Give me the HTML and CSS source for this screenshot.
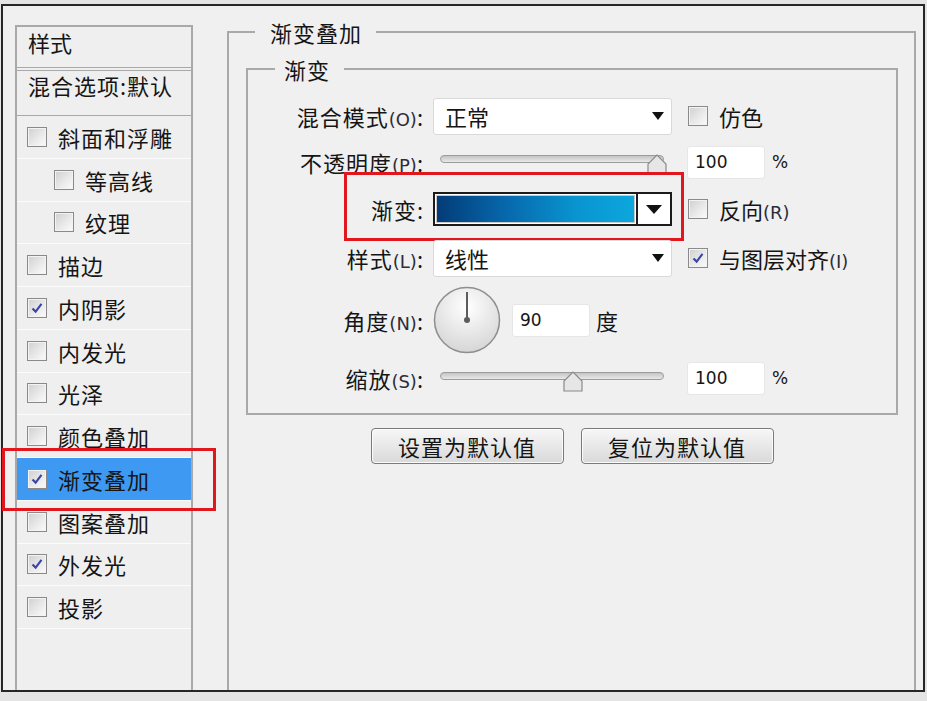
FILE: index.html
```html
<!DOCTYPE html>
<html lang="zh-CN">
<head>
    <meta charset="UTF-8">
    <title>图层样式 - 渐变叠加</title>
    <link rel="stylesheet" href="styles.css">
</head>
<body>
    <div class="window">
        <!-- 左侧样式列表 -->
        <div class="style-list">
            <div class="list-head">样式</div>
            <div class="list-blend">混合选项:默认</div>
            <div class="list-item"><span class="check"></span>斜面和浮雕</div>
            <div class="list-item sub"><span class="check"></span>等高线</div>
            <div class="list-item sub"><span class="check"></span>纹理</div>
            <div class="list-item"><span class="check"></span>描边</div>
            <div class="list-item"><span class="check on"><svg viewBox="0 0 20 20"><path d="M5 10.5 8.5 14 15 5.5"/></svg></span>内阴影</div>
            <div class="list-item"><span class="check"></span>内发光</div>
            <div class="list-item"><span class="check"></span>光泽</div>
            <div class="list-item"><span class="check"></span>颜色叠加</div>
            <div class="list-item selected"><span class="check on"><svg viewBox="0 0 20 20"><path d="M5 10.5 8.5 14 15 5.5"/></svg></span>渐变叠加<span class="mark mark-list"></span></div>
            <div class="list-item"><span class="check"></span>图案叠加</div>
            <div class="list-item"><span class="check on"><svg viewBox="0 0 20 20"><path d="M5 10.5 8.5 14 15 5.5"/></svg></span>外发光</div>
            <div class="list-item"><span class="check"></span>投影</div>
        </div>

        <!-- 右侧设置 -->
        <fieldset class="group">
            <legend>渐变叠加</legend>
            <fieldset class="group-inner">
                <legend>渐变</legend>

                <div class="row row-blend">
                    <label>混合模式<span class="hot">(O)</span>:</label>
                    <div class="select">正常<i class="caret"></i></div>
                    <div class="extra"><span class="check"></span><span class="extra-text">仿色</span></div>
                </div>

                <div class="row row-opacity">
                    <label>不透明度<span class="hot">(P)</span>:</label>
                    <div class="slider">
                        <span class="track"></span>
                        <svg class="thumb thumb-full" viewBox="0 0 20 21"><path d="M1 20V10L10 1l9 9v10z"/></svg>
                    </div>
                    <div class="extra value"><span class="num-box">100</span><span class="unit">%</span></div>
                </div>

                <div class="row row-gradient">
                    <label>渐变:</label>
                    <div class="gradient-pick">
                        <span class="gradient-bar"></span>
                        <span class="gradient-btn"><i class="caret big"></i></span>
                    </div>
                    <div class="extra"><span class="check"></span><span class="extra-text">反向<span class="hot">(R)</span></span></div>
                    <span class="mark mark-gradient"></span>
                </div>

                <div class="row row-style">
                    <label>样式<span class="hot">(L)</span>:</label>
                    <div class="select">线性<i class="caret"></i></div>
                    <div class="extra"><span class="check on"><svg viewBox="0 0 20 20"><path d="M5 10.5 8.5 14 15 5.5"/></svg></span><span class="extra-text">与图层对齐<span class="hot">(I)</span></span></div>
                </div>

                <div class="row row-angle">
                    <label>角度<span class="hot">(N)</span>:</label>
                    <div class="angle">
                        <svg class="dial" viewBox="0 0 68 68">
                            <defs>
                                <radialGradient id="dialFill" cx="50%" cy="30%" r="70%">
                                    <stop offset="0" stop-color="#ffffff"/>
                                    <stop offset="1" stop-color="#d6d6d6"/>
                                </radialGradient>
                            </defs>
                            <circle cx="34" cy="34" r="32.5" fill="url(#dialFill)" stroke="#8e8e8e" stroke-width="1.5"/>
                            <line x1="34" y1="34" x2="34" y2="6" stroke="#5c5c5c" stroke-width="2"/>
                            <circle cx="34" cy="34" r="3" fill="#5c5c5c"/>
                        </svg>
                        <span class="num-box">90</span>
                        <span class="angle-unit">度</span>
                    </div>
                </div>

                <div class="row row-scale">
                    <label>缩放<span class="hot">(S)</span>:</label>
                    <div class="slider">
                        <span class="track"></span>
                        <svg class="thumb thumb-mid" viewBox="0 0 20 21"><path d="M1 20V10L10 1l9 9v10z"/></svg>
                    </div>
                    <div class="extra value"><span class="num-box">100</span><span class="unit">%</span></div>
                </div>
            </fieldset>

            <div class="buttons">
                <button class="btn">设置为默认值</button>
                <button class="btn">复位为默认值</button>
            </div>
        </fieldset>
    </div>
</body>
</html>
```

FILE: styles.css
```css
* {
    box-sizing: border-box;
}
body {
    margin: 0;
    background-color: #e4e4e4;
    font-family: "Noto Sans CJK SC", "Noto Sans", sans-serif;
    font-size: 22px;
    color: #151515;
}
.window {
    display: flex;
    width: 924px;
    height: 688px;
    margin: 4px 0 0 1px;
    padding: 19px 0 0 12px;
    border: 2px solid #262626;
    background-color: #f0f0f0;
}

/* 左侧列表 */
.style-list {
    width: 178px;
    height: 665px;
    border: 2px solid #a9a9a9;
    border-bottom: none;
    background-color: #efefef;
    line-height: 1;
}
.list-head {
    height: 41px;
    padding: 4px 0 0 11px;
    border-bottom: 1px solid #a9a9a9;
    margin-bottom: 2px;
}
.list-blend {
    height: 46px;
    padding: 3px 0 0 11px;
    border-top: 1px solid #a9a9a9;
    border-bottom: 1px solid #a9a9a9;
    white-space: nowrap;
    letter-spacing: 1px;
}
.list-item {
    position: relative;
    display: flex;
    align-items: center;
    height: 42.75px;
    padding-left: 10px;
    border-bottom: 1px solid #fbfbfb;
    letter-spacing: 1px;
}
.list-item.sub {
    padding-left: 37px;
}
.list-item .check {
    margin-right: 11px;
}
.list-item.selected {
    background-color: #3d99f1;
}

/* 复选框 */
.check {
    display: inline-block;
    flex: none;
    width: 20px;
    height: 20px;
    border: 1px solid #8a8a8a;
    background: linear-gradient(135deg, #cfcfcf 0%, #e9e9e9 55%, #fbfbfb 100%);
    box-shadow: inset 0 0 0 1px #f3f3f3;
}
.check svg {
    display: block;
    width: 18px;
    height: 18px;
}
.check path {
    fill: none;
    stroke: #3b46a3;
    stroke-width: 2.4;
}

/* 标注红框 */
.mark {
    position: absolute;
    border: 3px solid #e2171e;
}
.mark-list {
    left: -15px;
    top: -10px;
    width: 214px;
    height: 63px;
}
.mark-gradient {
    left: 96px;
    top: -13px;
    width: 340px;
    height: 69px;
}

/* 右侧分组 */
.group {
    width: 689px;
    height: 671px;
    margin: -6px 0 0 34px;
    padding: 11px 16px 0 17px;
    border: 2px solid #a9a9a9;
    border-bottom: none;
}
.group legend,
.group-inner legend {
    line-height: 26px;
    letter-spacing: 1px;
}
.group legend {
    margin-left: 9px;
    padding: 0 14px 0 15px;
}
.group-inner {
    width: 652px;
    margin: 0;
    padding: 11px 0 14px;
    border: 2px solid #a9a9a9;
}
.group-inner legend {
    margin-left: 27px;
    padding: 0 14px 0 9px;
}

.row {
    position: relative;
    display: grid;
    grid-template-columns: 176px 239px 1fr;
    column-gap: 9px;
    align-items: center;
}
.row-blend { height: 46px; }
.row-opacity { height: 46px; }
.row-gradient { height: 48px; }
.row-style { height: 50px; }
.row-angle { height: 74px; }
.row-scale { height: 42px; }

.row label {
    text-align: right;
    white-space: nowrap;
    letter-spacing: 1px;
}
.hot {
    font-family: "DejaVu Sans", sans-serif;
    font-size: 18px;
    letter-spacing: 0;
    color: #2d2d3a;
}

.select {
    display: flex;
    align-items: center;
    height: 37px;
    padding: 0 7px 0 11px;
    border: 1px solid #d9d9d9;
    border-radius: 3px;
    background-color: #fff;
}
.caret {
    margin-left: auto;
    border-left: 6px solid transparent;
    border-right: 6px solid transparent;
    border-top: 8px solid #111;
}
.caret.big {
    margin: 0;
    border-left-width: 8px;
    border-right-width: 8px;
    border-top-width: 9px;
}

.extra {
    display: flex;
    align-items: center;
    margin-left: 7px;
}
.extra-text {
    margin-left: 11px;
    white-space: nowrap;
}
.extra.value {
    margin-left: 6px;
}

.num-box {
    display: inline-flex;
    align-items: center;
    width: 78px;
    height: 33px;
    padding-left: 7px;
    border: 1px solid #e6e6e6;
    border-radius: 3px;
    background-color: #fff;
    font-family: "DejaVu Sans", sans-serif;
    font-size: 17px;
}
.unit {
    margin-left: 7px;
    font-family: "DejaVu Sans", sans-serif;
    font-size: 17px;
}

/* 滑块 */
.slider {
    position: relative;
    width: 224px;
    height: 24px;
    margin: 8px 0 0 7px;
}
.track {
    display: block;
    height: 8px;
    margin-top: 1px;
    border: 1px solid #9c9c9c;
    border-radius: 4px;
    background: linear-gradient(#c4c4c4, #e9e9e9);
}
.thumb {
    position: absolute;
    top: 0;
    width: 20px;
    height: 21px;
}
.thumb path {
    fill: #e6e6e6;
    stroke: #8a8a8a;
    stroke-width: 1.2;
}
.thumb-full { left: 207px; }
.thumb-mid { left: 123px; }
.row-scale .slider {
    margin-top: 10px;
}

/* 渐变选择 */
.gradient-pick {
    display: flex;
    height: 34px;
    border: 2px solid #1b1b1b;
    background-color: #fff;
}
.gradient-bar {
    flex: 1;
    margin: 2px;
    background: linear-gradient(90deg, #033c78 0%, #0768ac 35%, #0994cf 70%, #0ca7dd 100%);
    box-shadow: 0 0 0 1px #c9c9c9;
}
.gradient-btn {
    display: flex;
    align-items: center;
    justify-content: center;
    width: 34px;
    border-left: 2px solid #1b1b1b;
}

/* 角度 */
.angle {
    display: flex;
    align-items: center;
}
.dial {
    width: 68px;
    height: 68px;
}
.angle .num-box {
    margin-left: 11px;
}
.angle-unit {
    margin-left: 6px;
}

/* 按钮 */
.buttons {
    display: flex;
    justify-content: center;
    gap: 17px;
    margin-top: 13px;
}
.btn {
    width: 193px;
    height: 36px;
    padding: 0;
    border: 1px solid #7a7a7a;
    border-radius: 4px;
    background: linear-gradient(#f7f7f7, #e8e8e8 50%, #d9d9d9);
    box-shadow: inset 0 0 0 1px #fbfbfb;
    font-family: inherit;
    font-size: 22px;
    letter-spacing: 1px;
    color: #151515;
}
```
